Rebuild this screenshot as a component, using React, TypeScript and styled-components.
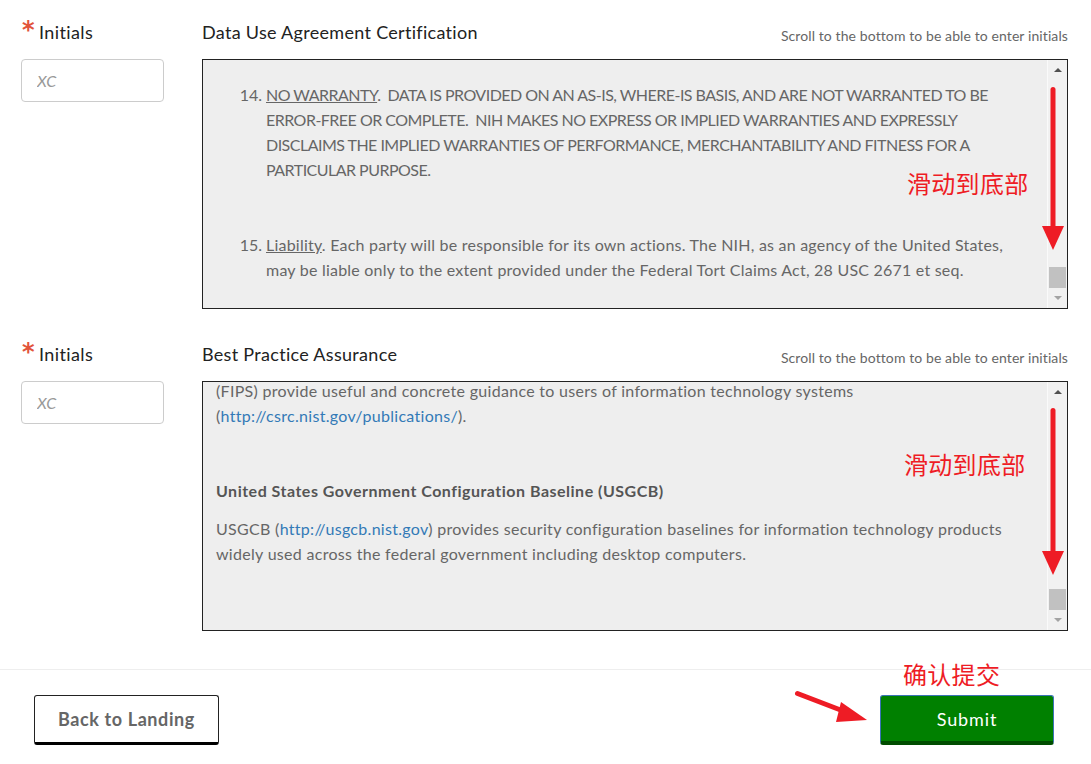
import React from "react";
import styled, { createGlobalStyle } from "styled-components";

const GlobalStyle = createGlobalStyle`
  html, body { margin: 0; padding: 0; background: #fff; }
  body { font-family: "Source Sans Pro", Lato, "Noto Sans CJK SC", sans-serif; color: #222; }
  * { box-sizing: border-box; }
`;

const Page = styled.div`
  width: 1091px;
  height: 764px;
  overflow: hidden;
  padding-top: 19px;
`;

const Section = styled.section<{ $gap?: number }>`
  display: grid;
  grid-template-columns: 181px 1fr;
  padding: 0 23px 0 21px;
  margin-bottom: ${(p) => p.$gap ?? 0}px;
`;

const LabelCol = styled.div`
  display: flex;
  flex-direction: column;
  gap: 14px;
`;

const Label = styled.label`
  display: flex;
  align-items: flex-start;
  height: 26px;
  line-height: 26px;
  font-size: 18px;
  letter-spacing: 0.4px;
  color: #222;
`;

const Star = styled.span`
  color: #e2543b;
  font-size: 24px;
  font-weight: 700;
  line-height: 22px;
  margin: 0 4px 0 1px;
  font-family: "DejaVu Sans", sans-serif;
`;

const InitialsInput = styled.input`
  width: 143px;
  height: 43px;
  border: 1px solid #ccc;
  border-radius: 4px;
  padding: 0 15px;
  font-size: 16px;
  font-style: italic;
  font-synthesis: style;
  font-family: "Source Sans Pro", Lato, sans-serif;
  background: #fff;
  &::placeholder { color: #999; font-style: italic; }
`;

const Main = styled.div`
  display: flex;
  flex-direction: column;
  gap: 14px;
`;

const HeaderRow = styled.div`
  display: flex;
  justify-content: space-between;
  align-items: center;
  height: 26px;
`;

const Title = styled.h3`
  margin: 0;
  font-size: 18px;
  font-weight: 400;
  letter-spacing: 0.3px;
  color: #222;
`;

const Note = styled.span`
  font-size: 14px;
  letter-spacing: 0.1px;
  color: #666;
  margin-top: 6px;
`;

const ScrollBox = styled.div`
  position: relative;
  display: flex;
  height: 250px;
  border: 1px solid #222;
  background: #eee;
  overflow: hidden;
`;

const ScrollContent = styled.div<{ $pad: string; $ls: number }>`
  flex: 1;
  overflow: hidden;
  padding: ${(p) => p.$pad};
  font-size: 16px;
  line-height: 25px;
  letter-spacing: ${(p) => p.$ls}px;
  color: #666;
  white-space: pre;
`;

const Item = styled.div<{ $mb?: number; $caps?: boolean }>`
  display: flex;
  margin-bottom: ${(p) => p.$mb ?? 0}px;
  ${(p) => (p.$caps ? "letter-spacing: -0.52px;" : "")}
`;

const Num = styled.span`
  width: 63px;
  flex: none;
  text-align: right;
  padding-right: 4px;
  letter-spacing: 0;
`;

const Line = styled.div``;

const U = styled.span`
  text-decoration: underline;
`;

const Link = styled.a`
  color: #337ab7;
  text-decoration: none;
`;

const Para = styled.p<{ $mt?: number; $mb?: number }>`
  margin: ${(p) => p.$mt ?? 0}px 0 ${(p) => p.$mb ?? 0}px;
`;

const Heading = styled.h4`
  margin: 0;
  font-size: 16px;
  line-height: 25px;
  font-weight: 700;
  letter-spacing: 0.5px;
  color: #555;
`;

const Scrollbar = styled.div`
  width: 20px;
  flex: none;
  display: flex;
  flex-direction: column;
  background: #f1f1f1;
  border-left: 1px solid #fafafa;
`;

const SbButton = styled.div<{ $dir: "up" | "down"; $dim?: boolean }>`
  height: 20px;
  display: flex;
  align-items: center;
  justify-content: center;
  &::before {
    content: "";
    width: 0;
    height: 0;
    border-left: 4px solid transparent;
    border-right: 4px solid transparent;
    ${(p) =>
      p.$dir === "up"
        ? `border-bottom: 4px solid ${p.$dim ? "#a3a3a3" : "#505050"};`
        : `border-top: 4px solid ${p.$dim ? "#a3a3a3" : "#505050"};`}
  }
`;

const Track = styled.div`
  flex: 1;
  display: flex;
  flex-direction: column;
  justify-content: flex-end;
  align-items: center;
`;

const Thumb = styled.div`
  width: 17px;
  height: 21px;
  background: #c1c1c1;
`;

const Annotation = styled.span<{ $top: number; $left: number }>`
  position: absolute;
  top: ${(p) => p.$top}px;
  left: ${(p) => p.$left}px;
  color: #ee1c25;
  font-family: "Noto Sans CJK SC", sans-serif;
  font-size: 24px;
  line-height: 30px;
  letter-spacing: 0.3px;
  white-space: nowrap;
`;

const ArrowSvg = styled.svg<{ $top: number; $left: number }>`
  position: absolute;
  top: ${(p) => p.$top}px;
  left: ${(p) => p.$left}px;
  overflow: visible;
`;

const Divider = styled.hr`
  margin: 0;
  border: none;
  border-top: 1px solid #eee;
`;

const Footer = styled.div`
  display: flex;
  justify-content: space-between;
  align-items: center;
  padding: 25px 37px 0 34px;
`;

const Button = styled.button<{ $primary?: boolean }>`
  position: relative;
  height: 50px;
  border-radius: 3px;
  font-family: inherit;
  font-size: 18px;
  cursor: pointer;
  ${(p) =>
    p.$primary
      ? `
    width: 174px;
    background: #008000;
    color: #fff;
    font-weight: 400;
    letter-spacing: 0.9px;
    border: 1px solid #3b74b5;
    border-bottom: 4px solid #004d00;
  `
      : `
    width: 185px;
    background: #fff;
    color: #666;
    font-weight: 700;
    letter-spacing: 0.6px;
    border: 1px solid #222;
    border-bottom: 3px solid #000;
  `}
`;

const SubmitWrap = styled.div`
  position: relative;
`;

function VArrow({ top, left, length }: { top: number; left: number; length: number }) {
  return (
    <ArrowSvg $top={top} $left={left} width={22} height={length} viewBox={`0 0 22 ${length}`}>
      <line x1={11} y1={2.5} x2={11} y2={length - 20} stroke="#ee1c25" strokeWidth={5} strokeLinecap="round" />
      <polygon points={`0,${length - 24} 22,${length - 24} 11,${length}`} fill="#ee1c25" />
    </ArrowSvg>
  );
}

export default function App() {
  return (
    <>
      <GlobalStyle />
      <Page>
        <Section $gap={32}>
          <LabelCol>
            <Label>
              <Star>*</Star>Initials
            </Label>
            <InitialsInput placeholder="XC" />
          </LabelCol>
          <Main>
            <HeaderRow>
              <Title>Data Use Agreement Certification</Title>
              <Note>Scroll to the bottom to be able to enter initials</Note>
            </HeaderRow>
            <ScrollBox>
              <ScrollContent $pad="22px 0 0 0" $ls={0.22}>
                <Item $mb={50} $caps>
                  <Num>14.</Num>
                  <div>
                    <Line>
                      <U>NO WARRANTY</U>.  DATA IS PROVIDED ON AN AS-IS, WHERE-IS BASIS, AND ARE NOT WARRANTED TO BE
                    </Line>
                    <Line>ERROR-FREE OR COMPLETE.  NIH MAKES NO EXPRESS OR IMPLIED WARRANTIES AND EXPRESSLY</Line>
                    <Line>DISCLAIMS THE IMPLIED WARRANTIES OF PERFORMANCE, MERCHANTABILITY AND FITNESS FOR A</Line>
                    <Line>PARTICULAR PURPOSE.</Line>
                  </div>
                </Item>
                <Item>
                  <Num>15.</Num>
                  <div>
                    <Line>
                      <U>Liability</U>. Each party will be responsible for its own actions. The NIH, as an agency of the United States,
                    </Line>
                    <Line>may be liable only to the extent provided under the Federal Tort Claims Act, 28 USC 2671 et seq.</Line>
                  </div>
                </Item>
              </ScrollContent>
              <Scrollbar>
                <SbButton $dir="up" />
                <Track>
                  <Thumb />
                </Track>
                <SbButton $dir="down" $dim />
              </Scrollbar>
              <Annotation $top={108} $left={704}>滑动到底部</Annotation>
              <VArrow top={27} left={839} length={163} />
            </ScrollBox>
          </Main>
        </Section>

        <Section $gap={38}>
          <LabelCol>
            <Label>
              <Star>*</Star>Initials
            </Label>
            <InitialsInput placeholder="XC" />
          </LabelCol>
          <Main>
            <HeaderRow>
              <Title>Best Practice Assurance</Title>
              <Note>Scroll to the bottom to be able to enter initials</Note>
            </HeaderRow>
            <ScrollBox>
              <ScrollContent $pad="0 0 0 13px" $ls={0.3}>
                <Para $mt={-4}>
                  <Line>(FIPS) provide useful and concrete guidance to users of information technology systems</Line>
                  <Line>
                    (<Link href="#">http://csrc.nist.gov/publications/</Link>).
                  </Line>
                </Para>
                <Para $mt={50}>
                  <Heading>United States Government Configuration Baseline (USGCB)</Heading>
                </Para>
                <Para $mt={13}>
                  <Line>
                    USGCB (<Link href="#">http://usgcb.nist.gov</Link>) provides security configuration baselines for information technology products
                  </Line>
                  <Line>widely used across the federal government including desktop computers.</Line>
                </Para>
              </ScrollContent>
              <Scrollbar>
                <SbButton $dir="up" />
                <Track>
                  <Thumb />
                </Track>
                <SbButton $dir="down" $dim />
              </Scrollbar>
              <Annotation $top={67} $left={701}>滑动到底部</Annotation>
              <VArrow top={26} left={839} length={167} />
            </ScrollBox>
          </Main>
        </Section>

        <Divider />

        <Footer>
          <Button>Back to Landing</Button>
          <SubmitWrap>
            <Annotation $top={-36} $left={23}>确认提交</Annotation>
            <ArrowSvg $top={-4} $left={-85} width={75} height={32} viewBox="0 0 75 32">
              <line x1={2.5} y1={2.5} x2={56} y2={23} stroke="#ee1c25" strokeWidth={5} strokeLinecap="round" />
              <polygon points="46,11 72,29 41,31" fill="#ee1c25" />
            </ArrowSvg>
            <Button $primary>Submit</Button>
          </SubmitWrap>
        </Footer>
      </Page>
    </>
  );
}
